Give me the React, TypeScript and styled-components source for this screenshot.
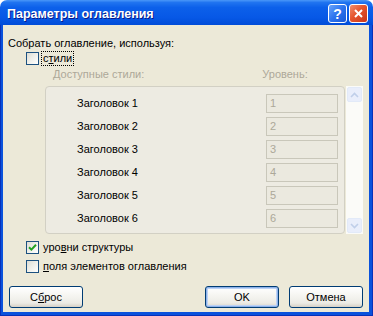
import React from "react";
import styled, { createGlobalStyle, css } from "styled-components";

const GlobalStyle = createGlobalStyle`
  html, body {
    margin: 0;
    padding: 0;
    background: #ffffff;
  }
  body {
    font-family: "Liberation Sans", Arial, sans-serif;
    font-size: 11px;
    color: #000000;
  }
`;

const Window = styled.div`
  width: 373px;
  height: 316px;
  display: flex;
  flex-direction: column;
  box-sizing: border-box;
`;

const TitleBar = styled.div`
  height: 25px;
  flex: none;
  display: flex;
  align-items: center;
  padding: 2px 5px 0 7px;
  box-sizing: border-box;
  border-radius: 7px 7px 0 0;
  background: linear-gradient(
    to bottom,
    #4a97f8 0%,
    #2074f0 10%,
    #0c60ea 30%,
    #0758e6 70%,
    #004cd8 100%
  );
`;

const Title = styled.div`
  flex: 1;
  font-family: "Liberation Sans", Arial, sans-serif;
  font-weight: bold;
  font-size: 12.5px;
  color: #ffffff;
  text-shadow: 1px 1px 0 #0a1a8a;
`;

const CaptionButton = styled.div<{ $close?: boolean }>`
  width: 19px;
  height: 19px;
  box-sizing: border-box;
  margin-left: 2px;
  border: 1px solid #ffffff;
  border-radius: 3px;
  display: flex;
  align-items: center;
  justify-content: center;
  color: #ffffff;
  font-weight: bold;
  font-size: 14px;
  ${({ $close }) =>
    $close
      ? css`
          background: linear-gradient(135deg, #f08e6e 0%, #e5542c 45%, #c8361a 100%);
        `
      : css`
          background: linear-gradient(135deg, #6aa4fb 0%, #2b73ee 50%, #1a58d6 100%);
        `}
`;

const Frame = styled.div`
  flex: 1;
  display: flex;
  background: #0a52dc;
  padding: 0 4px 4px 3px;
  box-shadow: inset 1px 0 0 #0831b9, inset -1px 0 0 #0831b9, inset 0 -1px 0 #0831b9;
`;

const Body = styled.div`
  flex: 1;
  background: #ece9d8;
  padding: 12px 5px 0 5px;
  display: flex;
  flex-direction: column;
`;

const Text = styled.div<{ $disabled?: boolean }>`
  height: 13px;
  line-height: 13px;
  white-space: nowrap;
  color: ${({ $disabled }) => ($disabled ? "#aca899" : "#000000")};
`;

const CheckRow = styled.div<{ $top: number }>`
  display: flex;
  align-items: center;
  height: 13px;
  margin-top: ${({ $top }) => $top}px;
  margin-left: 18px;
`;

const Box = styled.div`
  width: 13px;
  height: 13px;
  box-sizing: border-box;
  border: 1px solid #1c5180;
  background: linear-gradient(135deg, #dcdcd4 0%, #eeeee8 45%, #ffffff 100%);
  display: flex;
  align-items: center;
  justify-content: center;
`;

const CheckLabel = styled.span<{ $focus?: boolean }>`
  margin-left: 2px;
  padding: 0 1px;
  line-height: 13px;
  border: 1px dotted ${({ $focus }) => ($focus ? "#000000" : "transparent")};
`;

const U = styled.span`
  text-decoration: underline;
`;

const Headers = styled.div`
  display: flex;
  margin-top: 3px;
  padding-left: 45px;
  height: 13px;
`;

const HeaderLevel = styled(Text)`
  margin-left: 118px;
`;

const ListArea = styled.div`
  display: flex;
  margin-top: 5px;
  margin-left: 37px;
  width: 318px;
  height: 148px;
`;

const ListBox = styled.div`
  flex: 1;
  box-sizing: border-box;
  border: 1px solid #d2d0c4;
  border-radius: 4px;
  background: #edebe2;
  padding: 7px 6px 0 31px;
  display: flex;
  flex-direction: column;
  gap: 4px;
`;

const StyleRow = styled.div`
  display: flex;
  align-items: center;
  justify-content: space-between;
  height: 19px;
`;

const LevelInput = styled.div`
  width: 72px;
  height: 19px;
  box-sizing: border-box;
  border: 1px solid #c9c7ba;
  background: #ebe9df;
  color: #aca899;
  padding-left: 3px;
  line-height: 17px;
`;

const ScrollBar = styled.div`
  width: 17px;
  margin-left: 1px;
  background: #fbfbf8;
  display: flex;
  flex-direction: column;
  justify-content: space-between;
  padding: 1px 0 1px 1px;
  box-sizing: border-box;
`;

const ScrollButton = styled.div`
  width: 15px;
  height: 15px;
  box-sizing: border-box;
  border: 1px solid #e2eaf8;
  border-radius: 2px;
  background: #e9eefb;
  display: flex;
  align-items: center;
  justify-content: center;
`;

const ButtonRow = styled.div`
  display: flex;
  margin-top: 13px;
  padding-left: 1px;
`;

const Button = styled.div<{ $default?: boolean; $gap?: number }>`
  width: 74px;
  height: 22px;
  box-sizing: border-box;
  margin-left: ${({ $gap }) => $gap ?? 0}px;
  border: 1px solid #003c74;
  border-radius: 3px;
  background: linear-gradient(
    to bottom,
    #ffffff 0%,
    #f6f6f2 40%,
    #ecebe5 80%,
    #d6d0c5 100%
  );
  display: flex;
  align-items: center;
  justify-content: center;
  line-height: 13px;
  ${({ $default }) =>
    $default &&
    css`
      box-shadow: inset 0 0 0 1px #8db2e9, inset 0 0 0 2px #bcd2f5;
    `}
`;

const Chevron = ({ up }: { up?: boolean }) => (
  <svg width="9" height="6" viewBox="0 0 9 6">
    <path
      d={up ? "M1 5 L4.5 1.5 L8 5" : "M1 1 L4.5 4.5 L8 1"}
      fill="none"
      stroke="#c0cfe9"
      strokeWidth="1.6"
    />
  </svg>
);

const Check = () => (
  <svg width="9" height="9" viewBox="0 0 9 9">
    <path d="M1 4.2 L3.4 6.6 L8 1.8" fill="none" stroke="#21a121" strokeWidth="2" />
  </svg>
);

const levels = [1, 2, 3, 4, 5, 6];

export default function App() {
  return (
    <>
      <GlobalStyle />
      <Window>
        <TitleBar>
          <Title>Параметры оглавления</Title>
          <CaptionButton>?</CaptionButton>
          <CaptionButton $close>
            <svg width="11" height="11" viewBox="0 0 11 11">
              <path d="M2 2 L9 9 M9 2 L2 9" stroke="#ffffff" strokeWidth="2" />
            </svg>
          </CaptionButton>
        </TitleBar>
        <Frame>
          <Body>
            <Text>Собрать оглавление, используя:</Text>
            <CheckRow $top={2}>
              <Box />
              <CheckLabel $focus>
                с<U>т</U>или
              </CheckLabel>
            </CheckRow>
            <Headers>
              <Text $disabled>Доступные стили:</Text>
              <HeaderLevel $disabled>Уровень:</HeaderLevel>
            </Headers>
            <ListArea>
              <ListBox>
                {levels.map((n) => (
                  <StyleRow key={n}>
                    <Text>Заголовок {n}</Text>
                    <LevelInput>{n}</LevelInput>
                  </StyleRow>
                ))}
              </ListBox>
              <ScrollBar>
                <ScrollButton>
                  <Chevron up />
                </ScrollButton>
                <ScrollButton>
                  <Chevron />
                </ScrollButton>
              </ScrollBar>
            </ListArea>
            <CheckRow $top={7}>
              <Box>
                <Check />
              </Box>
              <CheckLabel>
                уро<U>в</U>ни структуры
              </CheckLabel>
            </CheckRow>
            <CheckRow $top={6}>
              <Box />
              <CheckLabel>
                <U>п</U>оля элементов оглавления
              </CheckLabel>
            </CheckRow>
            <ButtonRow>
              <Button>
                <span>
                  С<U>б</U>рос
                </span>
              </Button>
              <Button $default $gap={122}>
                OK
              </Button>
              <Button $gap={10}>Отмена</Button>
            </ButtonRow>
          </Body>
        </Frame>
      </Window>
    </>
  );
}
